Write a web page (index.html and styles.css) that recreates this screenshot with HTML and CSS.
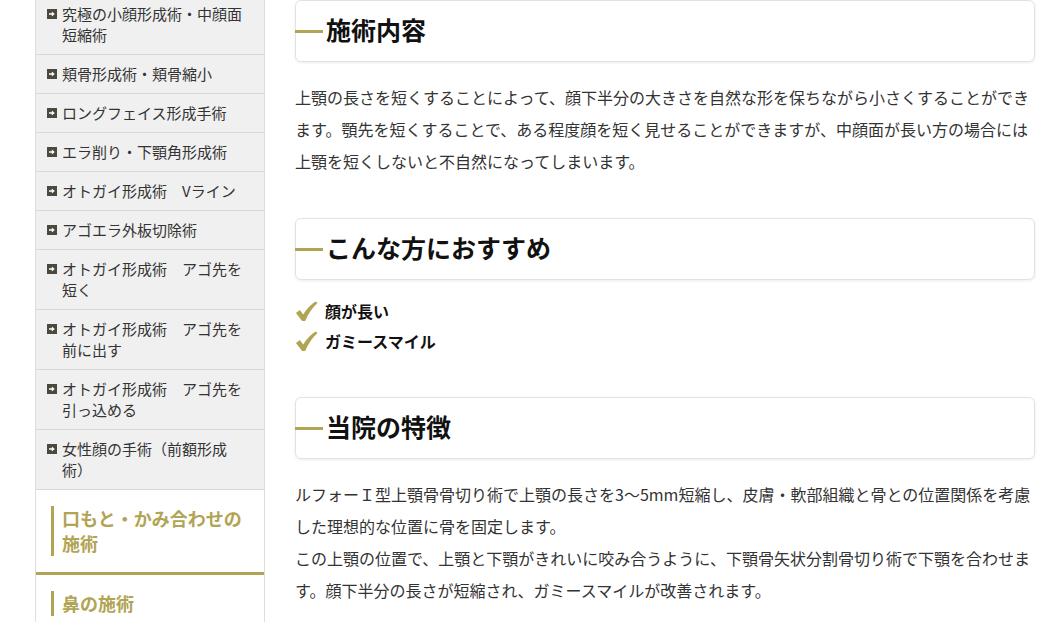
FILE: index.html
```html
<!DOCTYPE html>
<html lang="ja">
<head>
<meta charset="utf-8">
<title>施術内容</title>
<link rel="stylesheet" href="styles.css">
</head>
<body>
<div class="page">
  <aside class="sidebar">
    <ul class="menu">
      <li class="menu-item"><svg class="ico" viewBox="0 0 10 10"><rect width="10" height="10" fill="#4b483d"/><polygon points="2,4.2 4.8,4.2 4.8,2.6 7.8,5 4.8,7.4 4.8,5.8 2,5.8" fill="#fff"/></svg><span>究極の小顔形成術・中顔面短縮術</span></li>
      <li class="menu-item"><svg class="ico" viewBox="0 0 10 10"><rect width="10" height="10" fill="#4b483d"/><polygon points="2,4.2 4.8,4.2 4.8,2.6 7.8,5 4.8,7.4 4.8,5.8 2,5.8" fill="#fff"/></svg><span>頬骨形成術・頬骨縮小</span></li>
      <li class="menu-item"><svg class="ico" viewBox="0 0 10 10"><rect width="10" height="10" fill="#4b483d"/><polygon points="2,4.2 4.8,4.2 4.8,2.6 7.8,5 4.8,7.4 4.8,5.8 2,5.8" fill="#fff"/></svg><span>ロングフェイス形成手術</span></li>
      <li class="menu-item"><svg class="ico" viewBox="0 0 10 10"><rect width="10" height="10" fill="#4b483d"/><polygon points="2,4.2 4.8,4.2 4.8,2.6 7.8,5 4.8,7.4 4.8,5.8 2,5.8" fill="#fff"/></svg><span>エラ削り・下顎角形成術</span></li>
      <li class="menu-item"><svg class="ico" viewBox="0 0 10 10"><rect width="10" height="10" fill="#4b483d"/><polygon points="2,4.2 4.8,4.2 4.8,2.6 7.8,5 4.8,7.4 4.8,5.8 2,5.8" fill="#fff"/></svg><span>オトガイ形成術　Vライン</span></li>
      <li class="menu-item"><svg class="ico" viewBox="0 0 10 10"><rect width="10" height="10" fill="#4b483d"/><polygon points="2,4.2 4.8,4.2 4.8,2.6 7.8,5 4.8,7.4 4.8,5.8 2,5.8" fill="#fff"/></svg><span>アゴエラ外板切除術</span></li>
      <li class="menu-item"><svg class="ico" viewBox="0 0 10 10"><rect width="10" height="10" fill="#4b483d"/><polygon points="2,4.2 4.8,4.2 4.8,2.6 7.8,5 4.8,7.4 4.8,5.8 2,5.8" fill="#fff"/></svg><span>オトガイ形成術　アゴ先を短く</span></li>
      <li class="menu-item"><svg class="ico" viewBox="0 0 10 10"><rect width="10" height="10" fill="#4b483d"/><polygon points="2,4.2 4.8,4.2 4.8,2.6 7.8,5 4.8,7.4 4.8,5.8 2,5.8" fill="#fff"/></svg><span>オトガイ形成術　アゴ先を前に出す</span></li>
      <li class="menu-item"><svg class="ico" viewBox="0 0 10 10"><rect width="10" height="10" fill="#4b483d"/><polygon points="2,4.2 4.8,4.2 4.8,2.6 7.8,5 4.8,7.4 4.8,5.8 2,5.8" fill="#fff"/></svg><span>オトガイ形成術　アゴ先を引っ込める</span></li>
      <li class="menu-item"><svg class="ico" viewBox="0 0 10 10"><rect width="10" height="10" fill="#4b483d"/><polygon points="2,4.2 4.8,4.2 4.8,2.6 7.8,5 4.8,7.4 4.8,5.8 2,5.8" fill="#fff"/></svg><span>女性顔の手術（前額形成術）</span></li>
    </ul>
    <div class="cat cat-active"><span class="cat-title">口もと・かみ合わせの施術</span></div>
    <div class="cat"><span class="cat-title">鼻の施術</span></div>
  </aside>

  <main class="main">
    <section class="block">
      <h2 class="heading"><span class="heading-line"></span>施術内容</h2>
      <p class="text">上顎の長さを短くすることによって、顔下半分の大きさを自然な形を保ちながら小さくすることができます。顎先を短くすることで、ある程度顔を短く見せることができますが、中顔面が長い方の場合には上顎を短くしないと不自然になってしまいます。</p>
    </section>

    <section class="block">
      <h2 class="heading"><span class="heading-line"></span>こんな方におすすめ</h2>
      <ul class="checks">
        <li class="check"><svg class="check-ico" viewBox="0 0 24 24"><path d="M1 13.5 L5 10.5 L8.6 15.2 Q13.5 6.5 21.5 1.5 L23.5 3.2 Q15.5 10.5 10.6 22 L7.4 22 Z" fill="#b1a454"/></svg>顔が長い</li>
        <li class="check"><svg class="check-ico" viewBox="0 0 24 24"><path d="M1 13.5 L5 10.5 L8.6 15.2 Q13.5 6.5 21.5 1.5 L23.5 3.2 Q15.5 10.5 10.6 22 L7.4 22 Z" fill="#b1a454"/></svg>ガミースマイル</li>
      </ul>
    </section>

    <section class="block">
      <h2 class="heading"><span class="heading-line"></span>当院の特徴</h2>
      <p class="text">ルフォーＩ型上顎骨骨切り術で上顎の長さを3～5mm短縮し、皮膚・軟部組織と骨との位置関係を考慮した理想的な位置に骨を固定します。<br>この上顎の位置で、上顎と下顎がきれいに咬み合うように、下顎骨矢状分割骨切り術で下顎を合わせます。顔下半分の長さが短縮され、ガミースマイルが改善されます。</p>
    </section>
  </main>
</div>
</body>
</html>
```

FILE: styles.css
```css
* {
  box-sizing: border-box;
}

html, body {
  margin: 0;
  padding: 0;
  background: #fff;
}

body {
  font-family: "Noto Sans CJK JP", "Noto Sans", sans-serif;
  color: #333;
  overflow: hidden;
  text-spacing-trim: space-all;
}

.page {
  display: flex;
  align-items: flex-start;
  padding-left: 35px;
}

/* ---------- Sidebar ---------- */
.sidebar {
  width: 230px;
  flex: none;
  margin-top: -5px;
  border-left: 1px solid #dedede;
  border-right: 1px solid #dedede;
  background: #fff;
}

.menu {
  list-style: none;
  margin: 0;
  padding: 0;
  background: #f0f0f0;
}

.menu-item {
  display: flex;
  align-items: flex-start;
  gap: 5px;
  padding: 8px 17px 9px 11px;
  border-bottom: 1px solid #d9d9d9;
  font-size: 15px;
  line-height: 21px;
  color: #333;
}

.ico {
  width: 10px;
  height: 10px;
  flex: none;
  margin-top: 6px;
}

.cat {
  padding: 16px 14px 16px 15px;
  background: #fff;
}

.cat-active {
  border-bottom: 3px solid #b1a454;
}

.cat-title {
  display: block;
  border-left: 3px solid #b1a454;
  padding-left: 8px;
  font-size: 18px;
  line-height: 25px;
  font-weight: 700;
  color: #b1a454;
}

/* ---------- Main ---------- */
.main {
  width: 740px;
  flex: none;
  margin-left: 30px;
}

.block {
  margin-bottom: 41px;
}

.heading {
  display: flex;
  align-items: center;
  gap: 3px;
  height: 62px;
  margin: 0 0 19px;
  padding-bottom: 5px;
  border: 1px solid #e2e2e2;
  border-radius: 6px;
  box-shadow: 0 1px 3px rgba(0, 0, 0, 0.08);
  font-size: 25px;
  line-height: 30px;
  font-weight: 700;
  color: #111;
}

.heading-line {
  display: block;
  width: 28px;
  height: 3px;
  margin-left: -1px;
  margin-top: 5px;
  background: #b1a454;
  flex: none;
}

.text {
  margin: 0;
  font-size: 16px;
  line-height: 32px;
  color: #333;
}

.checks {
  list-style: none;
  margin: -3px 0 0;
  padding: 0;
}

.check {
  display: flex;
  align-items: center;
  gap: 7px;
  height: 30px;
  font-size: 16px;
  font-weight: 700;
  color: #111;
}

.check-ico {
  width: 23px;
  height: 23px;
  flex: none;
}
```
